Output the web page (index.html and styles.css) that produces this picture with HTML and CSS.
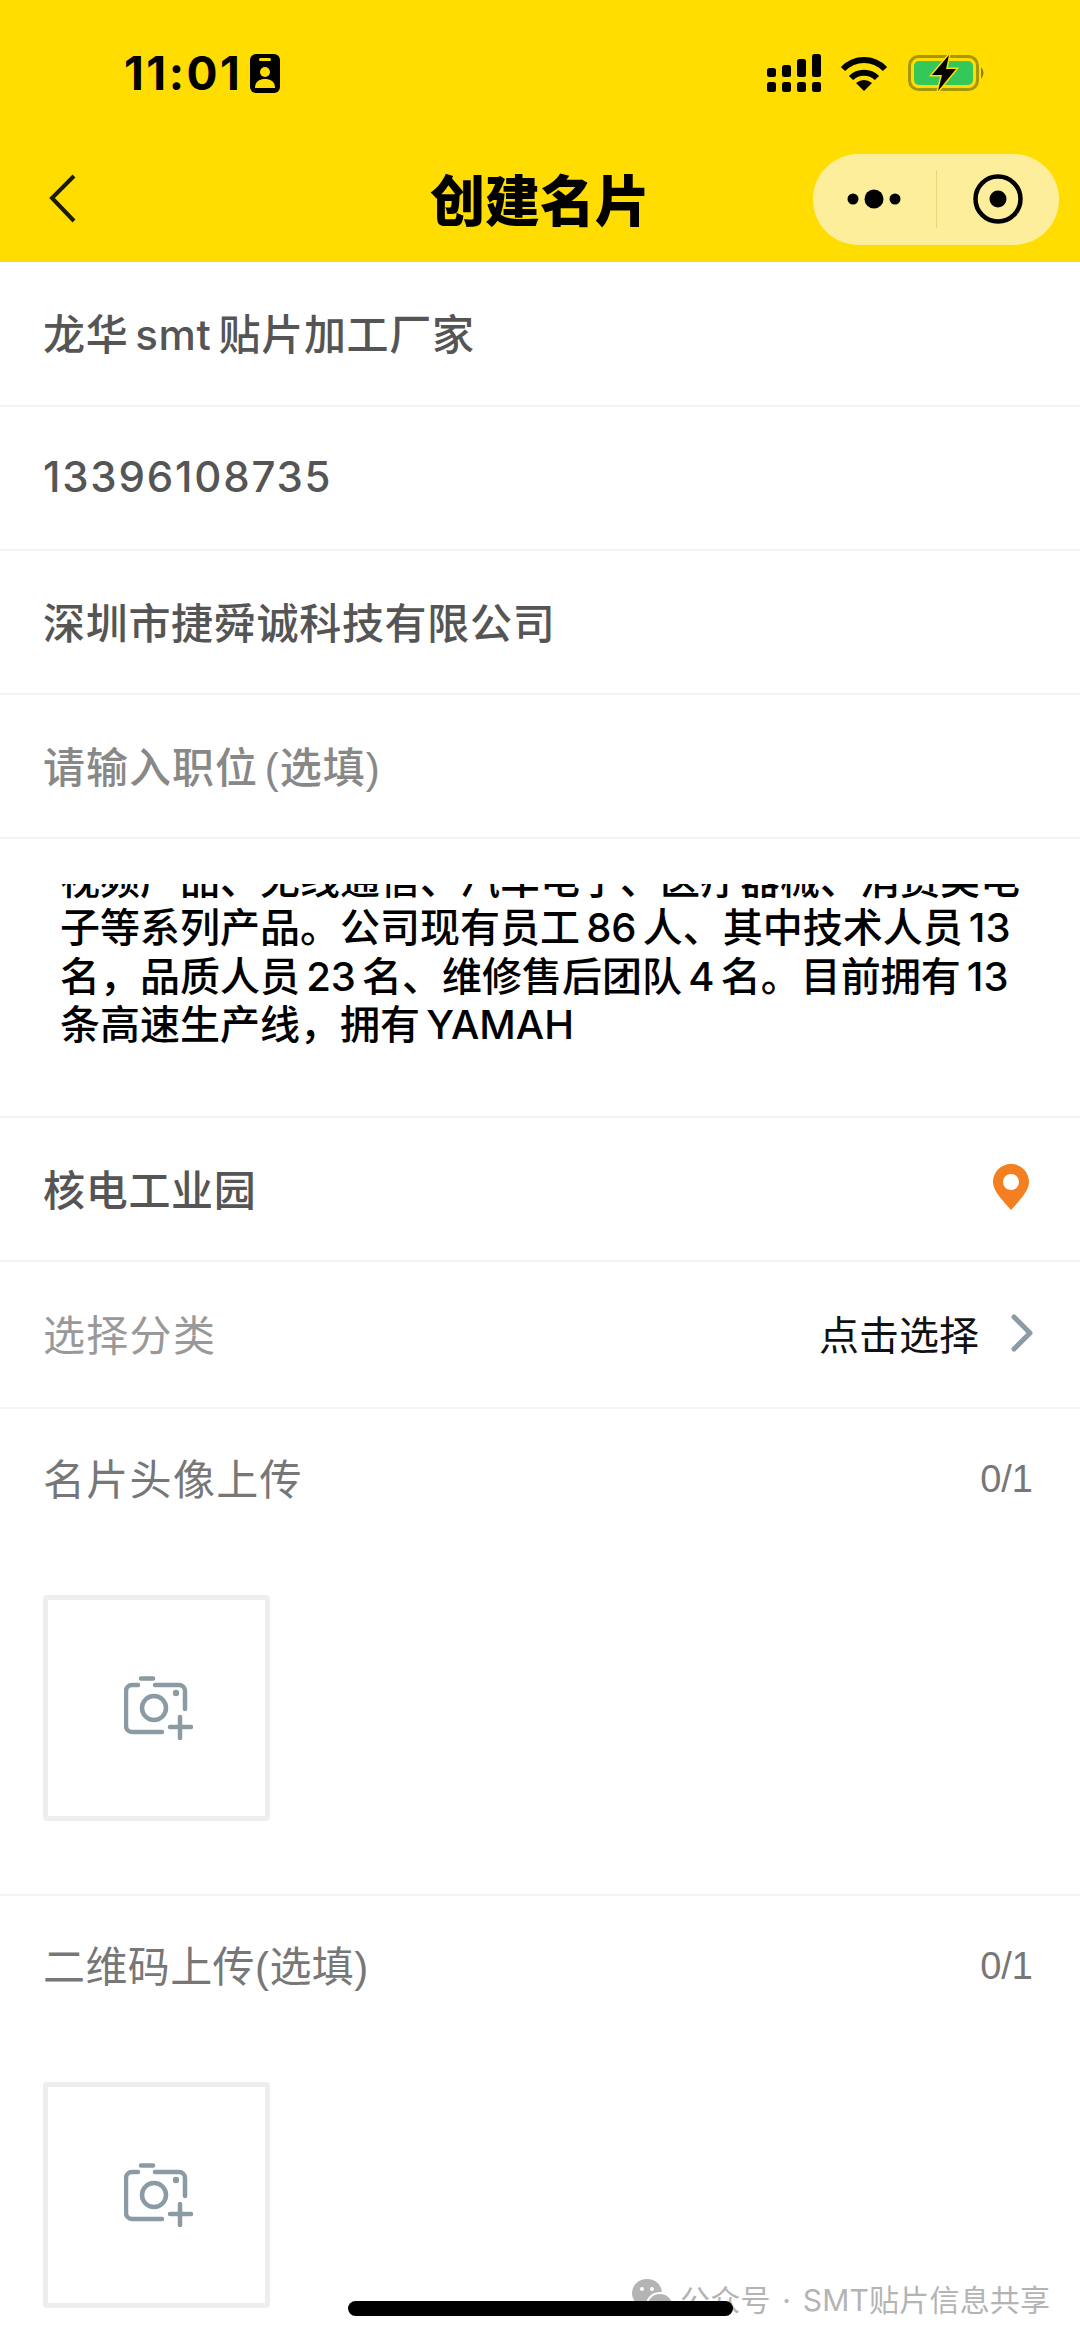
FILE: index.html
```html
<!DOCTYPE html>
<html>
	<head>
		<meta http-equiv="content-type" content="text/html; charset=utf-8" />
		<title>创建名片</title>
		<link rel="stylesheet" href="styles.css">
	</head>
	<body>
		<div class="page">
			<div class="topbar">
				<div class="status">
					<div class="status-left">
						<span class="time">11:01</span>
						<svg width="30" height="39" viewBox="0 0 30 39">
							<rect width="30" height="39" rx="6" fill="#000"/>
							<rect x="9" y="4" width="12" height="3" rx="1.5" fill="#FFDD00"/>
							<circle cx="15" cy="18" r="5" fill="#FFDD00"/>
							<path d="M5 34 c0 -7 5 -9 10 -9 s10 2 10 9 z" fill="#FFDD00"/>
						</svg>
					</div>
					<div class="status-right">
						<svg width="55" height="38" viewBox="0 0 55 38">
							<rect x="0" y="14" width="9" height="9" rx="2.5"/>
							<rect x="15" y="11" width="9" height="12" rx="2.5"/>
							<rect x="30" y="5" width="9" height="18" rx="2.5"/>
							<rect x="45" y="0" width="9" height="23" rx="2.5"/>
							<rect x="0" y="28" width="9" height="10" rx="2.5"/>
							<rect x="15" y="28" width="9" height="10" rx="2.5"/>
							<rect x="30" y="28" width="9" height="10" rx="2.5"/>
							<rect x="45" y="28" width="9" height="10" rx="2.5"/>
						</svg>
						<svg width="48" height="35" viewBox="0 0 48 35">
							<path d="M3 13 C15 1 33 1 45 13" fill="none" stroke="#000" stroke-width="6"/>
							<path d="M11 22 C18 15 30 15 37 22" fill="none" stroke="#000" stroke-width="6"/>
							<path d="M16 27 Q24 21 32 27 L24 35 Z" fill="#000"/>
						</svg>
						<svg class="battery" width="80" height="38" viewBox="0 0 80 38">
							<rect x="1.5" y="2.5" width="68" height="33" rx="9" fill="none" stroke="#A89600" stroke-width="3"/>
							<rect x="6" y="7" width="59" height="24" rx="5" fill="#34C759"/>
							<path d="M73 13 q5 6 0 12 z" fill="#8A7C00"/>
							<path d="M41 1 L24 21 L34 21 L30 37 L48 15 L38 15 Z" fill="#000" stroke="#FFDD00" stroke-width="3" paint-order="stroke"/>
						</svg>
					</div>
				</div>
				<div class="nav">
					<div class="nav-left">
						<svg width="28" height="50" viewBox="0 0 28 50">
							<path d="M25 2 L3 24 L25 47" fill="none" stroke="#1a1a00" stroke-width="4"/>
						</svg>
					</div>
					<h1>创建名片</h1>
					<div class="nav-right">
						<div class="capsule">
							<div class="capsule-btn">
								<svg width="56" height="20" viewBox="0 0 56 20">
									<circle cx="7" cy="10" r="5.5"/>
									<circle cx="28" cy="10" r="9.5"/>
									<circle cx="49" cy="10" r="5.5"/>
								</svg>
							</div>
							<div class="capsule-line"></div>
							<div class="capsule-btn">
								<svg width="50" height="50" viewBox="0 0 50 50">
									<circle cx="25" cy="25" r="22.5" fill="none" stroke="#000" stroke-width="4.5"/>
									<circle cx="25" cy="25" r="8.5"/>
								</svg>
							</div>
						</div>
					</div>
				</div>
			</div>

			<div class="row row-first"><span class="value tight">龙华 smt 贴片加工厂家</span></div>
			<div class="row"><span class="value phone">13396108735</span></div>
			<div class="row"><span class="value">深圳市捷舜诚科技有限公司</span></div>
			<div class="row"><span class="placeholder">请输入职位 (选填)</span></div>

			<div class="notes">
				<div class="notes-scroll">
					<p>视频产品、无线通信、汽车电子、医疗器械、消费类电<br>子等系列产品。公司现有员工 86 人、其中技术人员 13<br>名，品质人员 23 名、维修售后团队 4 名。目前拥有 13<br>条高速生产线，拥有 YAMAH</p>
				</div>
			</div>

			<div class="row row-split">
				<span class="value">核电工业园</span>
				<svg class="pin" width="36" height="46" viewBox="0 0 36 46">
					<path fill-rule="evenodd" d="M18 0 C28 0 36 8 36 18 C36 27 26 37 18 46 C10 37 0 27 0 18 C0 8 8 0 18 0 Z M18 10 a8 8 0 1 0 0.01 0 Z" fill="#F47F20"/>
				</svg>
			</div>
			<div class="row row-split row-tall">
				<span class="label">选择分类</span>
				<div class="pick">
					<span>点击选择</span>
					<svg width="22" height="38" viewBox="0 0 22 38">
						<path d="M3 3 L19 19 L3 35" fill="none" stroke="#8A9BA3" stroke-width="5" stroke-linecap="round" stroke-linejoin="round"/>
					</svg>
				</div>
			</div>

			<div class="upload">
				<div class="upload-head">
					<span class="label dark">名片头像上传</span>
					<span class="count">0/1</span>
				</div>
				<div class="upload-box">
					<svg class="camera" width="70" height="64" viewBox="0 0 70 64">
						<g fill="none" stroke="#8A9BA3" stroke-width="4.5" stroke-linecap="round">
							<path d="M17 2.5 H29"/>
							<path d="M14 9 H8 a6 6 0 0 0 -6 6 V50 a6 6 0 0 0 6 6 H38"/>
							<path d="M31 9 H55 a6 6 0 0 1 6 6 V33"/>
							<circle cx="30" cy="32" r="12"/>
							<path d="M46 51 H67 M56 41 V62"/>
						</g>
						<circle cx="52" cy="17" r="3.2" fill="#8A9BA3"/>
					</svg>
				</div>
			</div>
			<div class="upload">
				<div class="upload-head">
					<span class="label dark narrow">二维码上传(选填)</span>
					<span class="count">0/1</span>
				</div>
				<div class="upload-box">
					<svg class="camera" width="70" height="64" viewBox="0 0 70 64">
						<g fill="none" stroke="#8A9BA3" stroke-width="4.5" stroke-linecap="round">
							<path d="M17 2.5 H29"/>
							<path d="M14 9 H8 a6 6 0 0 0 -6 6 V50 a6 6 0 0 0 6 6 H38"/>
							<path d="M31 9 H55 a6 6 0 0 1 6 6 V33"/>
							<circle cx="30" cy="32" r="12"/>
							<path d="M46 51 H67 M56 41 V62"/>
						</g>
						<circle cx="52" cy="17" r="3.2" fill="#8A9BA3"/>
					</svg>
				</div>
			</div>

			<div class="watermark">
				<svg width="42" height="42" viewBox="0 0 42 42">
					<ellipse cx="15" cy="16" rx="15" ry="14" fill="#b4b4b4"/>
					<ellipse cx="28" cy="28" rx="13" ry="12" fill="#b4b4b4" stroke="#fff" stroke-width="2"/>
					<circle cx="10" cy="12" r="2" fill="#fff"/>
					<circle cx="20" cy="12" r="2" fill="#fff"/>
					<circle cx="24" cy="26" r="1.8" fill="#fff"/>
					<circle cx="33" cy="26" r="1.8" fill="#fff"/>
				</svg>
				<span>公众号 · SMT贴片信息共享</span>
			</div>
			<div class="homebar"></div>
		</div>
	</body>
</html>
```

FILE: styles.css
```css
html, body {
  margin: 0;
  padding: 0;
}

body {
  background-color: #fff;
  font-family: Inter, "Noto Sans CJK SC", sans-serif;
}

.page {
  position: relative;
  width: 1080px;
  height: 2339px;
  overflow: hidden;
}

.topbar {
  height: 262px;
  background-color: #FFDD00;
}

.status {
  height: 146px;
  display: flex;
  justify-content: space-between;
  align-items: center;
  padding: 0 92px 0 124px;
}

.status-left {
  display: flex;
  align-items: center;
  gap: 8px;
}

.time {
  font-size: 46px;
  font-weight: 700;
  letter-spacing: 2.5px;
  color: #000;
}

.status-right {
  display: flex;
  align-items: center;
  gap: 18px;
}

.battery {
  margin-left: 2px;
}

.nav {
  height: 106px;
  display: grid;
  grid-template-columns: 1fr auto 1fr;
  align-items: center;
}

.nav-left {
  padding-left: 49px;
  display: flex;
}

h1 {
  margin: 0;
  padding-bottom: 5px;
  font-size: 55px;
  font-weight: 900;
  color: #000;
}

.nav-right {
  display: flex;
  justify-content: flex-end;
  padding-right: 21px;
}

.capsule {
  width: 246px;
  height: 91px;
  border-radius: 46px;
  background-color: #FDEE9C;
  display: flex;
  align-items: center;
}

.capsule-btn {
  flex: 1;
  display: flex;
  justify-content: center;
}

.capsule-line {
  width: 1px;
  height: 58px;
  background-color: #E6D67E;
}

.row {
  height: 144px;
  box-sizing: border-box;
  border-bottom: 2px solid #f3f3f3;
  padding: 0 47px 4px 43px;
  display: flex;
  align-items: center;
  font-size: 42px;
}

.row-first {
  height: 145px;
}

.row-split {
  justify-content: space-between;
}

.row-tall {
  height: 147px;
}

.value {
  color: #555;
  font-weight: 500;
  letter-spacing: 0.7px;
}

.tight {
  word-spacing: -5px;
}

.phone {
  font-size: 42px;
  letter-spacing: 1.8px;
}

.placeholder {
  font-family: "Liberation Sans", "Noto Sans CJK SC", sans-serif;
  color: #888;
  font-weight: 500;
  letter-spacing: 1px;
  word-spacing: -6px;
}

.label {
  font-family: "Liberation Sans", "Noto Sans CJK SC", sans-serif;
  color: #999;
  font-size: 42px;
  letter-spacing: 1.3px;
}

.label.dark {
  color: #777;
}

.label.narrow {
  letter-spacing: 0.4px;
}

.notes {
  height: 279px;
  box-sizing: border-box;
  border-bottom: 2px solid #f3f3f3;
  padding-top: 45px;
}

.notes-scroll {
  height: 200px;
  overflow: hidden;
}

.notes p {
  margin: -28px 0 0 0;
  padding-left: 60px;
  font-size: 40px;
  line-height: 48.3px;
  font-weight: 500;
  word-spacing: -4.5px;
  color: #000;
  white-space: nowrap;
}

.pin {
  margin-right: 4px;
}

.pick {
  display: flex;
  align-items: center;
  gap: 32px;
  color: #111;
  font-size: 40px;
}

.upload {
  height: 487px;
  box-sizing: border-box;
  border-bottom: 2px solid #f3f3f3;
  padding: 0 47px 0 43px;
}

.upload-head {
  height: 135px;
  display: flex;
  justify-content: space-between;
  align-items: center;
  margin-bottom: 51px;
}

.count {
  padding-top: 6px;
  font-family: "Liberation Sans", sans-serif;
  font-size: 38px;
  color: #777;
}

.upload-box {
  width: 227px;
  height: 226px;
  box-sizing: border-box;
  border: 5px solid #eee;
  border-radius: 4px;
  display: flex;
  justify-content: center;
  align-items: center;
}

.camera {
  margin-left: 4px;
}

.watermark {
  position: absolute;
  left: 632px;
  top: 2276px;
  display: flex;
  align-items: center;
  gap: 6px;
  font-size: 30px;
  letter-spacing: 0.2px;
  word-spacing: 3px;
  color: #b4b4b4;
}

.homebar {
  position: absolute;
  left: 348px;
  top: 2301px;
  width: 385px;
  height: 15px;
  border-radius: 8px;
  background-color: #000;
}
```
